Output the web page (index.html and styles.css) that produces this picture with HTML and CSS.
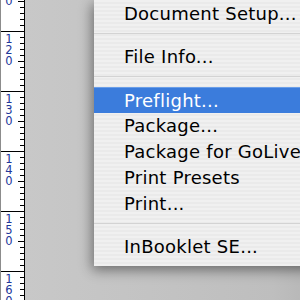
FILE: index.html
```html
<!DOCTYPE html>
<html lang="en">
<head>
    <meta charset="UTF-8">
    <title>File menu</title>
    <link rel="stylesheet" href="styles.css">
</head>
<body>
    <div class="ruler">
        <div class="ruler-track">
            <div class="rule-sec"><span class="num">110</span><svg class="ticks" width="6" height="59"><path d="M2 6h4M2 12h4M2 18h4M2 24h4M0 30h6M2 36h4M2 42h4M2 48h4M2 54h4" stroke="#000" stroke-width="1" shape-rendering="crispEdges"/></svg></div>
            <div class="rule-sec"><span class="num">120</span><svg class="ticks" width="6" height="59"><path d="M2 6h4M2 12h4M2 18h4M2 24h4M0 30h6M2 36h4M2 42h4M2 48h4M2 54h4" stroke="#000" stroke-width="1" shape-rendering="crispEdges"/></svg></div>
            <div class="rule-sec"><span class="num">130</span><svg class="ticks" width="6" height="59"><path d="M2 6h4M2 12h4M2 18h4M2 24h4M0 30h6M2 36h4M2 42h4M2 48h4M2 54h4" stroke="#000" stroke-width="1" shape-rendering="crispEdges"/></svg></div>
            <div class="rule-sec"><span class="num">140</span><svg class="ticks" width="6" height="59"><path d="M2 6h4M2 12h4M2 18h4M2 24h4M0 30h6M2 36h4M2 42h4M2 48h4M2 54h4" stroke="#000" stroke-width="1" shape-rendering="crispEdges"/></svg></div>
            <div class="rule-sec"><span class="num">150</span><svg class="ticks" width="6" height="59"><path d="M2 6h4M2 12h4M2 18h4M2 24h4M0 30h6M2 36h4M2 42h4M2 48h4M2 54h4" stroke="#000" stroke-width="1" shape-rendering="crispEdges"/></svg></div>
            <div class="rule-sec"><span class="num">160</span><svg class="ticks" width="6" height="59"><path d="M2 6h4M2 12h4M2 18h4M2 24h4M0 30h6M2 36h4M2 42h4M2 48h4M2 54h4" stroke="#000" stroke-width="1" shape-rendering="crispEdges"/></svg></div>
        </div>
    </div>

    <div class="desk">
        <ul class="menu">
            <li class="item">Document Setup...</li>
            <li class="sep"></li>
            <li class="item">File Info...</li>
            <li class="sep"></li>
            <li class="item selected">Preflight...</li>
            <li class="item">Package...</li>
            <li class="item">Package for GoLive...</li>
            <li class="item">Print Presets</li>
            <li class="item">Print...</li>
            <li class="sep"></li>
            <li class="item">InBooklet SE...</li>
        </ul>
    </div>
</body>
</html>
```

FILE: styles.css
```css
:root {
    --fontMenu: "DejaVu Sans", "Lucida Grande", Verdana, sans-serif;
    --colorDesk: #c3c3c3;
    --colorSelected: #3b7cdc;
}

html, body {
    margin: 0;
    height: 300px;
    overflow: hidden;
}

body {
    display: flex;
    background-color: var(--colorDesk);
    font-family: var(--fontMenu);
}

.ruler {
    width: 23px;
    flex: none;
    background-color: #fff;
    border-left: 1px solid #8c8c8c;
    border-right: 1px solid #000;
    overflow: hidden;
}

.ruler-track {
    margin-top: -29px;
}

.rule-sec {
    height: 59px;
    border-top: 1px solid #000;
    display: flex;
    justify-content: space-between;
    align-items: flex-start;
}

.num {
    writing-mode: vertical-lr;
    text-orientation: upright;
    font-family: "DejaVu Sans", Verdana, sans-serif;
    font-size: 11.5px;
    line-height: 11px;
    letter-spacing: -3px;
    color: #22379a;
    padding: 0 0 0 2px;
}

.ticks {
    display: block;
    margin-top: -1px;
}

.desk {
    flex: 1;
    padding-left: 69px;
    background: linear-gradient(to right, #c8c8c8, #bebebe 80%, #b2b2b2);
}

.menu {
    list-style: none;
    margin: 0;
    padding: 1px 0 6px;
    width: 240px;
    align-self: flex-start;
    background: repeating-linear-gradient(to bottom, #f0f0f0 0 2px, #eaeaea 2px 4px);
    box-shadow: -2px 4px 12px rgba(0, 0, 0, 0.45);
}

.item {
    height: 26px;
    line-height: 26px;
    padding-left: 30px;
    font-size: 18px;
    letter-spacing: 0.25px;
    color: #000;
    white-space: nowrap;
}

.item.selected {
    background-color: var(--colorSelected);
    border-top: 1px solid #6a9ee8;
    height: 25px;
    line-height: 25px;
    color: #fff;
}

.sep {
    height: 17px;
    position: relative;
}

.sep::after {
    content: '';
    position: absolute;
    left: 0;
    right: 0;
    top: 6px;
    height: 1px;
    background-color: #d3d3d3;
}
```
